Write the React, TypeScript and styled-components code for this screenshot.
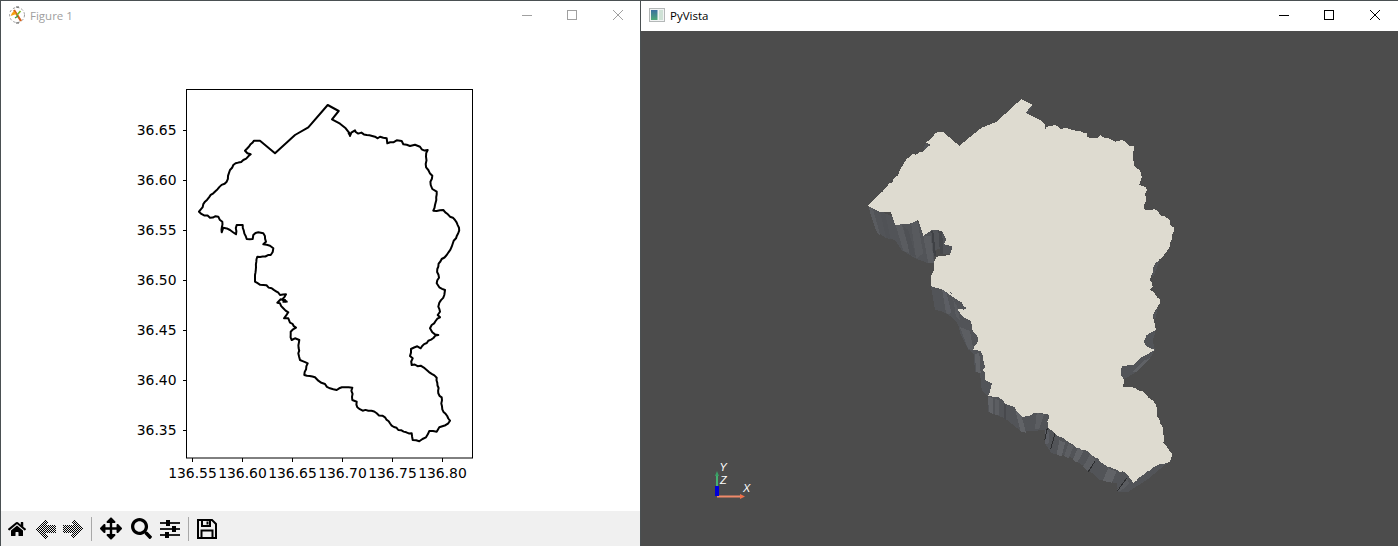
import React from "react";
import styled, { createGlobalStyle } from "styled-components";
import { FaHome, FaArrowsAlt, FaSearch } from "react-icons/fa";

const Global = createGlobalStyle`
  html, body { margin: 0; padding: 0; background: #fff; overflow: hidden; }
  #root { width: 1398px; height: 546px; }
`;

const Desktop = styled.div`
  display: flex;
  width: 1398px;
  height: 546px;
`;
const Win = styled.section<{ $w: number }>`
  display: flex;
  flex-direction: column;
  width: ${(p) => p.$w}px;
  height: 546px;
  box-sizing: border-box;
  border-top: 1px solid #4a5052;
  border-left: 1px solid #4a5052;
  background: #fff;
`;
const TitleBar = styled.header`
  display: flex;
  align-items: center;
  height: 30px;
  box-sizing: border-box;
  padding-bottom: 2px;
  flex: none;
  background: #fff;
`;
const AppIcon = styled.svg`
  width: 20px;
  height: 20px;
  margin-left: 6px;
  flex: none;
`;
const Title = styled.span<{ $active?: boolean }>`
  margin-left: 3px;
  font: 11.5px "Open Sans", "Noto Sans", sans-serif;
  color: ${(p) => (p.$active ? "#000" : "#a0a0a0")};
`;
const Controls = styled.div<{ $nudge: number }>`
  margin-left: auto;
  margin-right: ${(p) => p.$nudge}px;
  display: flex;
  height: 30px;
  margin-bottom: -2px;
  padding-bottom: 2px;
  box-sizing: border-box;
`;
const Ctl = styled.div`
  width: 46px;
  display: flex;
  align-items: center;
  justify-content: center;
  &:first-child {
    padding-left: 2px;
    box-sizing: border-box;
  }
`;
const CtlIcon = styled.svg<{ $c: string }>`
  width: 10px;
  height: 10px;
  stroke: ${(p) => p.$c};
  stroke-width: 1;
  fill: none;
  shape-rendering: crispEdges;
`;
const CtlX = styled(CtlIcon)`
  shape-rendering: auto;
`;
const FigureArea = styled.main`
  flex: 1;
  min-height: 0;
`;
const Plot = styled.svg`
  display: block;
  width: 639px;
  height: 480px;
`;
const Tick = styled.text`
  font: 13.9px "DejaVu Sans", sans-serif;
  fill: #000;
`;
const Toolbar = styled.nav`
  display: flex;
  align-items: center;
  height: 35px;
  flex: none;
  background: #f0f0f0;
  padding-left: 6px;
`;
const ToolBtn = styled.span<{ $w: number; $size: number; $mr: number }>`
  display: flex;
  align-items: center;
  justify-content: center;
  width: ${(p) => p.$w}px;
  height: 26px;
  font-size: ${(p) => p.$size}px;
  color: #000;
  margin-right: ${(p) => p.$mr}px;
`;
const Sep = styled.span`
  width: 1px;
  height: 24px;
  background: #a8a8a8;
  margin-right: 8px;
`;
const ToolSvg = styled.svg`
  width: 20px;
  height: 20px;
  display: block;
`;
const Viewport = styled.main`
  flex: 1;
  min-height: 0;
  background: #4c4c4c;
`;
const Scene = styled.svg`
  display: block;
  width: 757px;
  height: 515px;
`;
const AxisLabel = styled.text`
  font: italic 11px "Liberation Sans", sans-serif;
  fill: #fff;
`;

type P = [number, number];
const z = (ox: number, oy: number, pts: number[]) => {
  const out: P[] = [];
  for (let i = 0; i < pts.length; i += 2) out.push([ox + pts[i] / 3, oy + pts[i + 1] / 3]);
  return out;
};
const str = (pts: P[]) => pts.map(([x, y]) => `${x.toFixed(1)},${y.toFixed(1)}`).join(" ");
const noise = (i: number) => {
  const v = Math.sin(i * 12.9898) * 43758.5453;
  return (v - Math.floor(v)) * 2 - 1;
};
const rough = (pts: P[], amp: number, step: number, seed: number) => {
  const out: P[] = [];
  let k = seed;
  for (let i = 0; i < pts.length; i++) {
    const [x0, y0] = pts[i];
    out.push(pts[i]);
    if (i === pts.length - 1) break;
    const [x1, y1] = pts[i + 1];
    const len = Math.hypot(x1 - x0, y1 - y0);
    const n = Math.floor(len / step);
    for (let j = 1; j < n; j++) {
      const t = j / n;
      const o = noise(k++) * amp;
      out.push([x0 + (x1 - x0) * t - ((y1 - y0) / len) * o, y0 + (y1 - y0) * t + ((x1 - x0) / len) * o]);
    }
  }
  return out;
};

const outline: P[] = [
  ...z(180, 85, [443,60,476,78,456,103,480,116,497,130,507,143,510,153,514,143,525,136,527,141]),
  ...rough(z(180, 85, [527,141,560,150,585,155,593,160,600,155,620,160,622,175,640,172,650,166,665,168,670,178,690,183,705,179,720,185,725,193,743,195,738,215,737,237,745,255,757,272,752,300,757,312,770,320,769,345,765,360,760,377,790,375,810,395,825,405,837,428,828,460,815,485,800,510,785,522,775,545,772,552,777,578,770,595]), 1.0, 2.6, 1),
  ...rough(z(180, 280, [778,22,795,30,793,45,778,68,775,80,780,95,773,105,780,112,755,135,750,145,757,157,775,165,745,182,722,205,712,199,693,207,690,228,698,235,695,255,722,257,740,270,770,293,775,340,785,352,787,388,810,422,805,430,778,442,770,455,748,453,738,472,718,484,698,480,695,460,655,450,635,437,615,412,590,400,565,392,548,392,532,382,530,365,517,360,517,323,495,322,470,330,450,325,435,312,415,302,405,292,373,285,383,250,360,240,355,220,358,180,345,175,335,180,332,155,348,143,330,128,325,115,312,115,325,97,310,85,300,70,292,68,302,58,320,65,308,57,318,43,300,45,275,25,250,15,225,5]), 1.0, 2.6, 200),
  ...rough(z(180, 85, [225,570,232,515,272,510,280,490,270,482,250,478,258,470,250,445,235,442,220,450,218,462,200,462,188,420,170,420,168,448,150,435,130,428,125,442,127,410,115,395,90,398,57,380,75,350,100,325,140,290,150,255,160,240,190,225,212,208,195,197,222,167]), 0.9, 2.6, 500),
  ...z(180, 85, [240,167,285,205,345,150,385,127,443,60]),
];

const top3d: P[] = [
  ...z(860, 90, [484,27,518,44,497,68,540,90,555,105,556,118,560,110,575,107]),
  ...rough(z(860, 90, [575,107,640,120,680,130,682,140,712,145,720,135,745,145,765,155,795,153,805,165,823,168,818,205,830,235,843,250,838,285,858,292,857,320,851,358,885,358,905,378,930,392,942,425,930,465,912,495,885,520,880,545,872,560,878,590,870,600,900,628]), 1.3, 3, 800),
  ...z(920, 290, [720,38,698,75,708,120,680,135,672,155,680,170,705,180,660,205,640,225,605,228,603,255,612,268,610,290,645,293]),
  ...rough(z(920, 290, [645,293,680,315,705,340,712,380,730,420,730,460,758,495,750,515,715,525,680,545,640,578,618,550,560,530,510,490,460,465,405,430,385,415,385,372,350,370,310,382,285,352,255,340,245,328,205,318,215,280,195,270,190,210,183,185,160,180,175,150,155,115,150,90,130,80,112,60,140,55,115,32,95,10,85,0]), 1.2, 3, 1000),
  ...z(860, 90, [288,628,250,600,212,588,212,560,222,540,222,515,230,500,270,495,278,470,250,462,260,450,245,422,215,420,190,438,175,390,155,400,105,405,92,365,60,367,24,347]),
  ...rough(z(860, 90, [24,347,50,320,75,295,115,255,135,215,150,200,195,180,212,165,198,158,232,127]), 1.1, 3, 1300),
  ...z(860, 90, [250,127,298,167,365,113,410,95]),
];

const walls: P[][] = [
  z(860, 200, [25,20,50,95,80,115,105,120,125,150,165,175,205,190,222,190,222,150,278,140,250,90,100,50]),
  z(860, 200, [212,258,225,325,260,342,280,345,305,400,320,420,325,450,340,450,345,515,360,520,372,510,400,400,300,260]),
  z(920, 290, [35,0,45,60,75,65,115,100,120,130,145,178,165,195,168,245,180,250,185,300,205,320,205,365,255,385,305,425,375,420,375,460,395,490,450,500,500,535,540,570,590,580,595,605,625,605,680,570,735,525,755,510,640,400,300,200,150,30]),
  z(920, 290, [705,180,660,205,640,225,605,228,603,255,612,268,650,245,690,205]),
  z(920, 290, [708,120,680,135,672,155,680,170,705,180,698,150]),
  z(860, 90, [497,68,518,44,510,65,505,73,495,68]),
  z(860, 90, [198,158,212,170,200,182,190,178]),
  z(860, 90, [885,520,900,510,880,560,870,550,875,530]),
  z(920, 290, [698,75,708,62,715,50,705,90]),
];

const stripes: { p: P[]; c: string }[] = [
  { p: z(860, 200, [25,20,38,25,62,110,48,92]), c: "#5a5c60" },
  { p: z(860, 200, [60,35,75,38,92,118,78,112]), c: "#505256" },
  { p: z(860, 200, [106,72,125,72,150,160,130,152]), c: "#5a5c60" },
  { p: z(860, 200, [130,78,145,90,168,170,150,165]), c: "#4f5155" },
  { p: z(860, 200, [153,68,172,62,190,160,168,176]), c: "#585a5e" },
  { p: z(860, 200, [190,108,212,108,222,190,205,190]), c: "#5b5d61" },
  { p: z(860, 200, [214,92,220,92,228,168,221,166]), c: "#3f4145" },
  { p: z(860, 200, [235,90,245,90,252,160,240,162]), c: "#46484c" },
  { p: z(860, 200, [250,135,278,138,272,162,250,162]), c: "#515357" },
  { p: z(860, 200, [245,262,258,272,270,342,258,340]), c: "#5c5e62" },
  { p: z(860, 200, [280,300,292,320,300,362,288,350]), c: "#595b5f" },
  { p: z(860, 200, [300,382,330,392,340,450,325,448]), c: "#5c5e62" },
  { p: z(860, 200, [345,462,358,458,362,520,348,515]), c: "#616367" },
  { p: z(920, 290, [68,0,80,10,95,70,82,65]), c: "#5c5e64" },
  { p: z(920, 290, [205,320,218,324,220,372,206,366]), c: "#616367" },
  { p: z(920, 290, [224,326,236,330,238,376,225,374]), c: "#5c5e62" },
  { p: z(920, 290, [252,342,258,344,258,390,252,385]), c: "#48494d" },
  { p: z(920, 290, [285,358,305,380,318,428,302,424]), c: "#616367" },
  { p: z(920, 290, [350,370,372,372,358,416,345,416]), c: "#5c5e62" },
  { p: z(920, 290, [375,420,385,415,388,460,376,462]), c: "#5c5e64" },
  { p: z(920, 290, [418,450,435,458,425,498,410,495]), c: "#616367" },
  { p: z(920, 290, [445,462,462,468,445,505,432,498]), c: "#5c5e62" },
  { p: z(920, 290, [475,470,490,485,472,518,458,510]), c: "#616367" },
  { p: z(920, 290, [512,490,525,510,505,545,490,530]), c: "#5c5e62" },
  { p: z(920, 290, [565,535,590,545,575,578,548,572]), c: "#616367" },
  { p: z(920, 290, [620,565,628,580,600,605,590,600]), c: "#5a5c60" },
  { p: z(920, 290, [640,245,670,212,690,205,650,245]), c: "#5f6165" },
];

const darkLines: P[][] = [
  z(920, 290, [382,415,374,450]),
  z(920, 290, [405,430,392,478]),
  z(920, 290, [526,512,505,545]),
  z(920, 290, [620,565,592,603]),
];

const yTicks: [number, string][] = [
  [130.5, "36.65"], [180.5, "36.60"], [230.5, "36.55"], [280.5, "36.50"],
  [330.5, "36.45"], [380.5, "36.40"], [430.5, "36.35"],
];
const xTicks: [number, string][] = [
  [192.5, "136.55"], [242.5, "136.60"], [292.5, "136.65"],
  [342.5, "136.70"], [392.5, "136.75"], [442.5, "136.80"],
];

const FigureLogo = () => (
  <AppIcon viewBox="0 0 20 20">
    <circle cx="10" cy="10" r="7.5" fill="none" stroke="#9a9a9a" strokeWidth="1" strokeDasharray="2.4 2" />
    <path d="M7 5 L14 16" stroke="#d4601a" strokeWidth="2.2" />
    <path d="M3.5 11 L9.5 9 L7 6 L5 8 Z" fill="#f5a010" />
    <path d="M10 10 L13.5 6" stroke="#7cb82a" strokeWidth="1.6" />
    <path d="M8 13 L11 11" stroke="#3a9a3a" strokeWidth="1.4" />
    <path d="M9 2 L12 2 M9 18 L12 18" stroke="#555" strokeWidth="1" />
  </AppIcon>
);

const VistaLogo = () => (
  <AppIcon viewBox="0 0 20 20">
    <defs>
      <linearGradient id="vista" x1="0" y1="0" x2="0" y2="1">
        <stop offset="0" stopColor="#3a6fa0" />
        <stop offset="1" stopColor="#4fa878" />
      </linearGradient>
    </defs>
    <rect x="2.5" y="3.5" width="15" height="13" fill="#f2f4f4" stroke="#b4b8b8" />
    <rect x="4" y="5" width="6.5" height="10" fill="url(#vista)" />
    <rect x="12" y="5" width="4" height="10" fill="#cfe2d6" />
  </AppIcon>
);

const Dither = ({ id, d }: { id: string; d: string }) => (
  <ToolSvg viewBox="0 0 20 20">
    <defs>
      <pattern id={id} width="2" height="2" patternUnits="userSpaceOnUse">
        <rect width="1" height="1" fill="#000" />
        <rect x="1" y="1" width="1" height="1" fill="#000" />
      </pattern>
    </defs>
    <path d={d} fill={`url(#${id})`} shapeRendering="crispEdges" />
  </ToolSvg>
);

const SlidersIcon = () => (
  <ToolSvg viewBox="0 0 20 20">
    <path d="M0 4H20M0 10H20M0 16H20" stroke="#222" strokeWidth="2.2" />
    <rect x="6" y="1" width="4" height="6" fill="#000" />
    <rect x="12" y="7" width="4" height="6" fill="#000" />
    <rect x="5" y="13" width="4" height="6" fill="#000" />
  </ToolSvg>
);

const SaveIcon = () => (
  <ToolSvg viewBox="0 0 20 20">
    <path d="M1 1H15L19 5V19H1Z" fill="none" stroke="#000" strokeWidth="2" />
    <path d="M5 1.5V7H13V1.5" fill="none" stroke="#000" strokeWidth="2" />
    <rect x="9.5" y="2.5" width="2" height="3" fill="#000" />
    <path d="M4.5 18.5V11.5H15.5V18.5" fill="none" stroke="#000" strokeWidth="2" />
  </ToolSvg>
);

const WindowControls = ({ c, nudge }: { c: string; nudge: number }) => (
  <Controls $nudge={nudge}>
    <Ctl><CtlIcon $c={c} viewBox="0 0 10 10"><path d="M0 5.5H10" /></CtlIcon></Ctl>
    <Ctl><CtlIcon $c={c} viewBox="0 0 10 10"><rect x="0.5" y="0.5" width="9" height="9" /></CtlIcon></Ctl>
    <Ctl><CtlX $c={c} viewBox="0 0 10 10"><path d="M0 0L10 10M10 0L0 10" /></CtlX></Ctl>
  </Controls>
);

export default function App() {
  return (
    <Desktop>
      <Global />
      <Win $w={640}>
        <TitleBar>
          <FigureLogo />
          <Title>Figure 1</Title>
          <WindowControls c="#a0a0a0" nudge={-1} />
        </TitleBar>
        <FigureArea>
          <Plot viewBox="1 31 639 480">
            <rect x="186.5" y="89.5" width="286" height="368.5" fill="#fff" stroke="#000" strokeWidth="1" />
            {yTicks.map(([y, t]) => (
              <g key={t}>
                <path d={`M183 ${y}H186.5`} stroke="#000" strokeWidth="1" />
                <Tick x="176.5" y={y + 4} textAnchor="end">{t}</Tick>
              </g>
            ))}
            {xTicks.map(([x, t]) => (
              <g key={t}>
                <path d={`M${x} 458V462`} stroke="#000" strokeWidth="1" />
                <Tick x={x} y="478" textAnchor="middle">{t}</Tick>
              </g>
            ))}
            <polygon points={str(outline)} fill="none" stroke="#000" strokeWidth="2" strokeLinejoin="round" />
            <path d="M282.5 301H286 M348.5 134.5L350.5 133" stroke="#000" strokeWidth="3.4" />
          </Plot>
        </FigureArea>
        <Toolbar>
          <ToolBtn $w={20} $size={18} $mr={9}><FaHome /></ToolBtn>
          <ToolBtn $w={20} $size={20} $mr={7}>
            <Dither id="ditherL" d="M0 10 L9 0 L12.5 3.5 L9.5 6 H20 V14 H9.5 L12.5 16.5 L9 20 Z" />
          </ToolBtn>
          <ToolBtn $w={20} $size={20} $mr={8}>
            <Dither id="ditherR" d="M20 10 L11 0 L7.5 3.5 L10.5 6 H0 V14 H10.5 L7.5 16.5 L11 20 Z" />
          </ToolBtn>
          <Sep />
          <ToolBtn $w={22} $size={23} $mr={9}><FaArrowsAlt /></ToolBtn>
          <ToolBtn $w={21} $size={21} $mr={8}><FaSearch /></ToolBtn>
          <ToolBtn $w={20} $size={20} $mr={8}><SlidersIcon /></ToolBtn>
          <Sep />
          <ToolBtn $w={20} $size={20} $mr={0}><SaveIcon /></ToolBtn>
        </Toolbar>
      </Win>
      <Win $w={758}>
        <TitleBar>
          <VistaLogo />
          <Title $active>PyVista</Title>
          <WindowControls c="#000" nudge={0} />
        </TitleBar>
        <Viewport>
          <Scene viewBox="641 31 757 515">
            <g shapeRendering="crispEdges">
              {walls.map((w, i) => (
                <polygon key={i} points={str(w)} fill="#525458" />
              ))}
              {stripes.map((s, i) => (
                <polygon key={i} points={str(s.p)} fill={s.c} />
              ))}
              {darkLines.map((l, i) => (
                <polyline key={i} points={str(l)} fill="none" stroke="#2b2c2e" strokeWidth="1" />
              ))}
              <polygon points={str(top3d)} fill="#dedbd0" />
            </g>
            <path d="M717 496.5H741" stroke="#f08a6a" strokeWidth="2" />
            <path d="M740 494L745 496.5L740 499Z" fill="#f0704a" />
            <path d="M717 496V476" stroke="#45b070" strokeWidth="2" />
            <path d="M715 476L717 471L719 476Z" fill="#3aa066" />
            <path d="M717 496V486" stroke="#0000d8" strokeWidth="4" />
            <AxisLabel x="719.5" y="471">Y</AxisLabel>
            <AxisLabel x="720" y="484">Z</AxisLabel>
            <AxisLabel x="743" y="492">X</AxisLabel>
          </Scene>
        </Viewport>
      </Win>
    </Desktop>
  );
}
